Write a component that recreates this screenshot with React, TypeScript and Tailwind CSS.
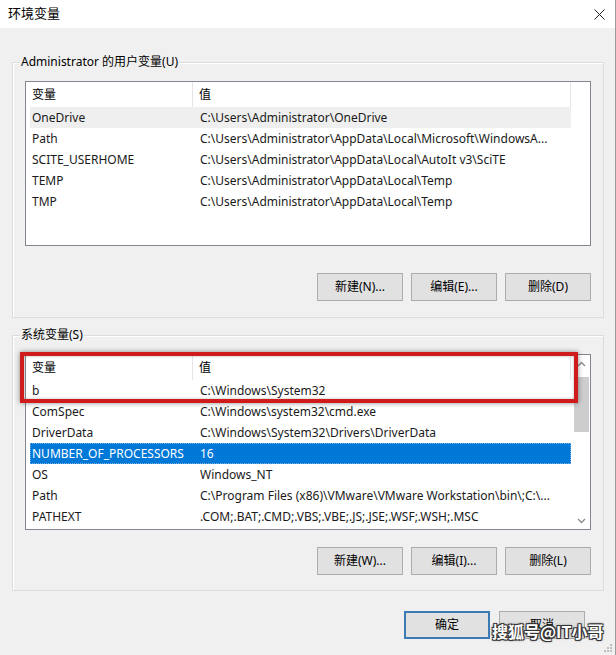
const font = { fontFamily: '"Noto Sans", "Noto Sans CJK SC", sans-serif' };

const userVars = [
  { name: "OneDrive", value: "C:\\Users\\Administrator\\OneDrive" },
  { name: "Path", value: "C:\\Users\\Administrator\\AppData\\Local\\Microsoft\\WindowsA..." },
  { name: "SCITE_USERHOME", value: "C:\\Users\\Administrator\\AppData\\Local\\AutoIt v3\\SciTE" },
  { name: "TEMP", value: "C:\\Users\\Administrator\\AppData\\Local\\Temp" },
  { name: "TMP", value: "C:\\Users\\Administrator\\AppData\\Local\\Temp" },
];

const sysVars = [
  { name: "b", value: "C:\\Windows\\System32" },
  { name: "ComSpec", value: "C:\\Windows\\system32\\cmd.exe" },
  { name: "DriverData", value: "C:\\Windows\\System32\\Drivers\\DriverData" },
  { name: "NUMBER_OF_PROCESSORS", value: "16" },
  { name: "OS", value: "Windows_NT" },
  { name: "Path", value: "C:\\Program Files (x86)\\VMware\\VMware Workstation\\bin\\;C:\\..." },
  { name: "PATHEXT", value: ".COM;.BAT;.CMD;.VBS;.VBE;.JS;.JSE;.WSF;.WSH;.MSC" },
];

type Row = { name: string; value: string };

function Button({ label, primary }: { label: string; primary?: boolean }) {
  return (
    <button
      className={`w-[86px] h-[28px] flex items-center justify-center text-[12px] text-black bg-[#e1e1e1] ${
        primary ? "border-2 border-[#3a7bb5]" : "border border-[#adadad]"
      }`}
    >
      {label}
    </button>
  );
}

function VarList({
  rows,
  height,
  selected,
  hovered,
  scroll,
  children,
}: {
  rows: Row[];
  height: string;
  selected?: number;
  hovered?: number;
  scroll?: boolean;
  children?: React.ReactNode;
}) {
  return (
    <div className={`relative w-[566px] ${height} bg-white border border-[#828790] flex`}>
      <div className="flex-1 flex flex-col">
        {/* Header */}
        <div className="flex h-[25px] items-center text-[12px] text-black">
          <div className="w-[167px] h-full flex items-center pl-[6px] border-r border-[#e5e5e5]">变量</div>
          <div className="w-[378px] h-full flex items-center pl-[6px] border-r border-[#e5e5e5]">值</div>
        </div>
        {rows.map((r, i) => (
          <div
            key={r.name + i}
            className={`ml-[4px] w-[541px] h-[21px] flex items-center text-[12px] ${
              i === selected
                ? "bg-[#0078d7] text-white outline outline-1 outline-dotted outline-[#7ab0e0] -outline-offset-1"
                : i === hovered
                ? "bg-[#efefef] text-[#1a1a1a]"
                : "text-[#1a1a1a]"
            }`}
          >
            <div className="w-[163px] pl-[2px] whitespace-nowrap overflow-hidden">{r.name}</div>
            <div className="flex-1 pl-[7px] whitespace-nowrap overflow-hidden">{r.value}</div>
          </div>
        ))}
      </div>
      {scroll ? (
        <div className="w-[17px] h-full flex flex-col items-center bg-white">
          <div className="h-[17px] flex items-center justify-center">
            <svg width="9" height="6" viewBox="0 0 9 6">
              <path d="M1 5 L4.5 1.5 L8 5" fill="none" stroke="#8a8a8a" strokeWidth="1.3" />
            </svg>
          </div>
          <div className="w-[15px] h-[55px] mt-[5px] bg-[#cdcdcd]" />
          <div className="flex-1" />
          <div className="h-[17px] flex items-center justify-center">
            <svg width="9" height="6" viewBox="0 0 9 6">
              <path d="M1 1 L4.5 4.5 L8 1" fill="none" stroke="#8a8a8a" strokeWidth="1.3" />
            </svg>
          </div>
        </div>
      ) : (
        <div className="w-[17px]" />
      )}
      {children}
    </div>
  );
}

function Group({ label, children }: { label: string; children: React.ReactNode }) {
  return (
    <div className="relative w-[592px] border border-[#dcdcdc] shadow-[inset_1px_1px_0_#ffffff] px-[12px] flex flex-col">
      <span className="absolute left-[7px] -top-[9px] h-[16px] leading-[16px] px-[1px] bg-[#f0f0f0] text-[12px] text-black">
        {label}
      </span>
      {children}
    </div>
  );
}

export default function App() {
  return (
    <div
      className="relative w-[616px] h-[655px] bg-[#f0f0f0] overflow-hidden border-r border-[#9a9a9a]"
      style={font}
    >
      {/* Title bar */}
      <div className="h-[28px] bg-white flex items-center justify-between pl-[8px] pr-[10px]">
        <span className="text-[13px] text-black">环境变量</span>
        <svg width="11" height="11" viewBox="0 0 11 11">
          <path d="M0.5 0.5 L10.5 10.5 M10.5 0.5 L0.5 10.5" stroke="#222" strokeWidth="1" />
        </svg>
      </div>

      <div className="pl-[12px] pt-[34px] flex flex-col">
        <Group label="Administrator 的用户变量(U)">
          <div className="pt-[18px]">
            <VarList rows={userVars} height="h-[165px]" hovered={0} />
          </div>
          <div className="flex justify-end gap-[8px] pt-[27px] pb-[16px]">
            <Button label="新建(N)..." />
            <Button label="编辑(E)..." />
            <Button label="删除(D)" />
          </div>
        </Group>

        <div className="h-[17px]" />

        <Group label="系统变量(S)">
          <div className="pt-[18px]">
            <VarList rows={sysVars} height="h-[176px]" selected={3} scroll>
              <div className="absolute -left-[6px] -top-[3px] w-[558px] h-[51px] border-[4px] border-[#cf1b1b] shadow-[0_0_5px_rgba(0,0,0,0.45),inset_0_0_3px_rgba(0,0,0,0.3)] pointer-events-none" />
            </VarList>
          </div>
          <div className="flex justify-end gap-[8px] pt-[17px] pb-[15px]">
            <Button label="新建(W)..." />
            <Button label="编辑(I)..." />
            <Button label="删除(L)" />
          </div>
        </Group>

        <div className="flex gap-[9px] pt-[20px] pl-[392px]">
          <Button label="确定" primary />
          <Button label="取消" />
        </div>
      </div>

      {/* Watermark */}
      <span
        className="absolute left-[492px] top-[620px] whitespace-nowrap text-[16px] leading-[22px] font-bold text-white"
        style={{
          fontFamily: '"Noto Sans CJK SC", sans-serif',
          textShadow:
            "1px 1px 0 #333, -1px -1px 0 #333, 1px -1px 0 #333, -1px 1px 0 #333, 0 0 3px #000",
        }}
      >
        搜狐号@IT小哥
      </span>

      {/* Resize grip */}
      <svg className="absolute right-[2px] bottom-[2px]" width="10" height="10" viewBox="0 0 10 10">
        <rect x="7" y="1" width="2" height="2" fill="#bdbdbd" />
        <rect x="4" y="4" width="2" height="2" fill="#bdbdbd" />
        <rect x="7" y="4" width="2" height="2" fill="#bdbdbd" />
        <rect x="1" y="7" width="2" height="2" fill="#bdbdbd" />
        <rect x="4" y="7" width="2" height="2" fill="#bdbdbd" />
        <rect x="7" y="7" width="2" height="2" fill="#bdbdbd" />
      </svg>
    </div>
  );
}
